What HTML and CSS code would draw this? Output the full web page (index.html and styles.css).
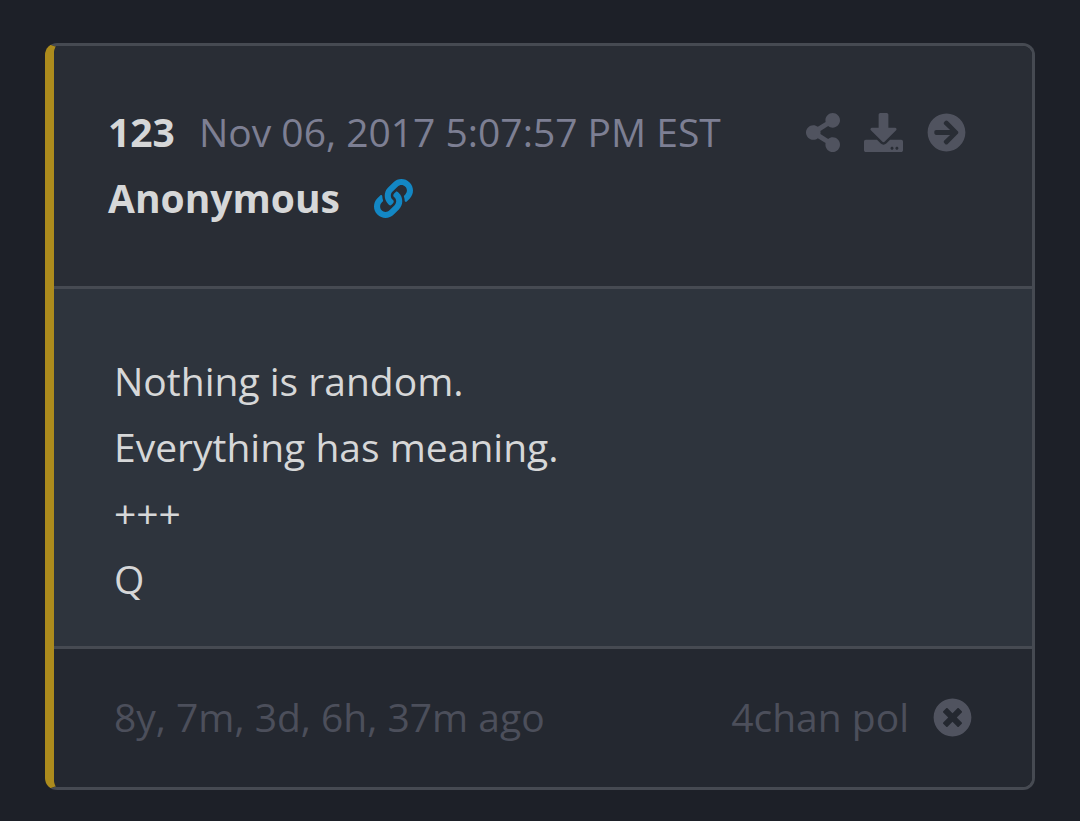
FILE: index.html
```html
<!DOCTYPE html>
<html lang="en">
<head>
<meta charset="utf-8">
<meta name="viewport" content="width=device-width, initial-scale=1">
<title>Post 123</title>
<link rel="stylesheet" href="styles.css">
</head>
<body>
<article class="post">
  <header class="post-header">
    <div class="meta">
      <strong class="number">123</strong>
      <time class="date">Nov 06, 2017 5:07:57 PM EST</time>
      <div class="actions">
        <button class="icon-button" aria-label="Share"><svg width="34" height="39" viewBox="0 0 448 512"><path d="M352 320c-22.600 0-43.400 7.800-59.800 20.900l-102.500-64.100a96.600 96.600 0 0 0 0-41.700l102.500-64.100C308.600 184.200 329.400 192 352 192c53 0 96-43 96-96S405 0 352 0s-96 43-96 96c0 7.200.8 14.100 2.300 20.800l-102.500 64.100C139.400 167.800 118.600 160 96 160c-53 0-96 43-96 96s43 96 96 96c22.600 0 43.400-7.800 59.800-20.900l102.500 64.100A96.300 96.300 0 0 0 256 416c0 53 43 96 96 96s96-43 96-96-43-96-96-96z"/></svg></button>
        <button class="icon-button" aria-label="Download"><svg width="39" height="39" viewBox="0 0 512 512"><path d="M216 0h80c13.300 0 24 10.700 24 24v168h87.700c17.800 0 26.700 21.500 14.100 34.100L269.700 378.300c-7.500 7.500-19.800 7.500-27.300 0L90.100 226.100c-12.600-12.600-3.700-34.100 14.100-34.100H192V24c0-13.300 10.700-24 24-24zm296 376v112c0 13.300-10.700 24-24 24H24c-13.300 0-24-10.700-24-24V376c0-13.300 10.700-24 24-24h146.700l49 49c20.100 20.100 52.500 20.100 72.600 0l49-49H488c13.300 0 24 10.700 24 24zm-124 88c0-11-9-20-20-20s-20 9-20 20 9 20 20 20 20-9 20-20zm64 0c0-11-9-20-20-20s-20 9-20 20 9 20 20 20 20-9 20-20z"/></svg></button>
        <button class="icon-button" aria-label="Open post"><svg width="39" height="39" viewBox="0 0 512 512"><path d="M256 8c137 0 248 111 248 248S393 504 256 504 8 393 8 256 119 8 256 8zm-28.900 143.600l75.500 72.400H120c-13.300 0-24 10.700-24 24v16c0 13.300 10.700 24 24 24h182.600l-75.500 72.400c-9.700 9.300-9.900 24.800-.4 34.300l11 10.900c9.400 9.400 24.600 9.400 33.900 0L404.300 273c9.400-9.400 9.400-24.600 0-33.900L271.600 106.300c-9.400-9.400-24.600-9.400-33.900 0l-11 10.900c-9.500 9.600-9.300 25.100.4 34.400z"/></svg></button>
      </div>
    </div>
    <div class="author">
      <strong>Anonymous</strong>
      <a class="link" href="#" aria-label="Permalink"><svg width="39" height="39" viewBox="0 0 512 512"><path d="M326.612 185.391c59.747 59.809 58.927 155.698.36 214.590-.11.120-.240.250-.360.370l-67.200 67.200c-59.270 59.270-155.699 59.262-214.960 0-59.270-59.260-59.270-155.700 0-214.960l37.106-37.106c9.840-9.840 26.786-3.300 27.294 10.606.648 17.722 3.826 35.527 9.690 52.721 1.986 5.822.567 12.262-3.783 16.612l-13.087 13.087c-28.026 28.026-28.905 73.660-1.155 101.960 28.024 28.579 74.086 28.749 102.325.510l67.200-67.190c28.191-28.191 28.073-73.757 0-101.830-3.701-3.694-7.429-6.564-10.341-8.569a16.037 16.037 0 0 1-6.947-12.606c-.396-10.567 3.348-21.456 11.698-29.806l21.054-21.055c5.521-5.521 14.182-6.199 20.584-1.731a152.482 152.482 0 0 1 20.522 17.197zM467.547 44.449c-59.261-59.262-155.690-59.270-214.960 0l-67.200 67.200c-.120.120-.250.250-.360.370-58.566 58.892-59.387 154.781.36 214.590a152.454 152.454 0 0 0 20.521 17.196c6.402 4.468 15.064 3.789 20.584-1.731l21.054-21.055c8.350-8.350 12.094-19.239 11.698-29.806a16.037 16.037 0 0 0-6.947-12.606c-2.912-2.005-6.640-4.875-10.341-8.569-28.073-28.073-28.191-73.639 0-101.830l67.200-67.190c28.239-28.239 74.300-28.069 102.325.510 27.750 28.300 26.872 73.934-1.155 101.960l-13.087 13.087c-4.350 4.350-5.769 10.790-3.783 16.612 5.864 17.194 9.042 34.999 9.690 52.721.509 13.906 17.454 20.446 27.294 10.606l37.106-37.106c59.271-59.259 59.271-155.699.001-214.959z"/></svg></a>
    </div>
  </header>
  <div class="post-body">
    <p>Nothing is random.</p>
    <p>Everything has meaning.</p>
    <p>+++</p>
    <p>Q</p>
  </div>
  <footer class="post-footer">
    <span>8y, 7m, 3d, 6h, 37m ago</span>
    <div class="source">
      <span>4chan pol</span>
      <button class="icon-button" aria-label="Close"><svg width="39" height="39" viewBox="0 0 512 512"><path d="M256 8C119 8 8 119 8 256s111 248 248 248 248-111 248-248S393 8 256 8zm121.600 313.100c4.700 4.700 4.700 12.300 0 17L338 377.600c-4.700 4.700-12.300 4.700-17 0L256 312l-65.100 65.600c-4.700 4.700-12.300 4.700-17 0L134.400 338c-4.700-4.700-4.700-12.300 0-17l65.600-65-65.600-65.100c-4.700-4.700-4.700-12.300 0-17l39.600-39.600c4.700-4.700 12.300-4.700 17 0l65 65.700 65.100-65.600c4.700-4.700 12.300-4.700 17 0l39.600 39.600c4.700 4.700 4.700 12.300 0 17L312 256l65.600 65.100z"/></svg></button>
    </div>
  </footer>
</article>
</body>
</html>
```
FILE: styles.css
```css
* { box-sizing: border-box; }
body {
  margin: 0;
  padding: 43px 45px 31px;
  background: #1d2028;
  color: #d6d7d8;
  font: 39px/66px "Open Sans", "Noto Sans", sans-serif;
}
p { margin: 0; }
svg { display: block; fill: currentColor; }
.post {
  border: 3px solid #464a52;
  border-left: 9px solid #ac8b1d;
  border-radius: 12px;
  overflow: hidden;
}
.post-header {
  padding: 53px 66px 55px 54px;
  background: #292d35;
}
.meta { display: flex; align-items: center; }
.date { margin-left: 24px; color: #7d7f93; }
.actions {
  display: flex;
  align-items: center;
  gap: 24px;
  margin-left: auto;
}
.icon-button {
  padding: 0;
  border: 0;
  background: none;
  color: #50535f;
  cursor: pointer;
}
.author { display: flex; align-items: center; gap: 34px; }
.link { color: #1387c4; }
.post-body {
  padding: 59px 60px 34px;
  border-top: 3px solid #464a52;
  border-bottom: 3px solid #464a52;
  background: #2e343d;
}
.post-footer {
  display: flex;
  align-items: center;
  justify-content: space-between;
  padding: 35px 60px 37px;
  background: #242830;
  color: #4c4f5b;
}
.source { display: flex; align-items: center; gap: 24px; }
```
